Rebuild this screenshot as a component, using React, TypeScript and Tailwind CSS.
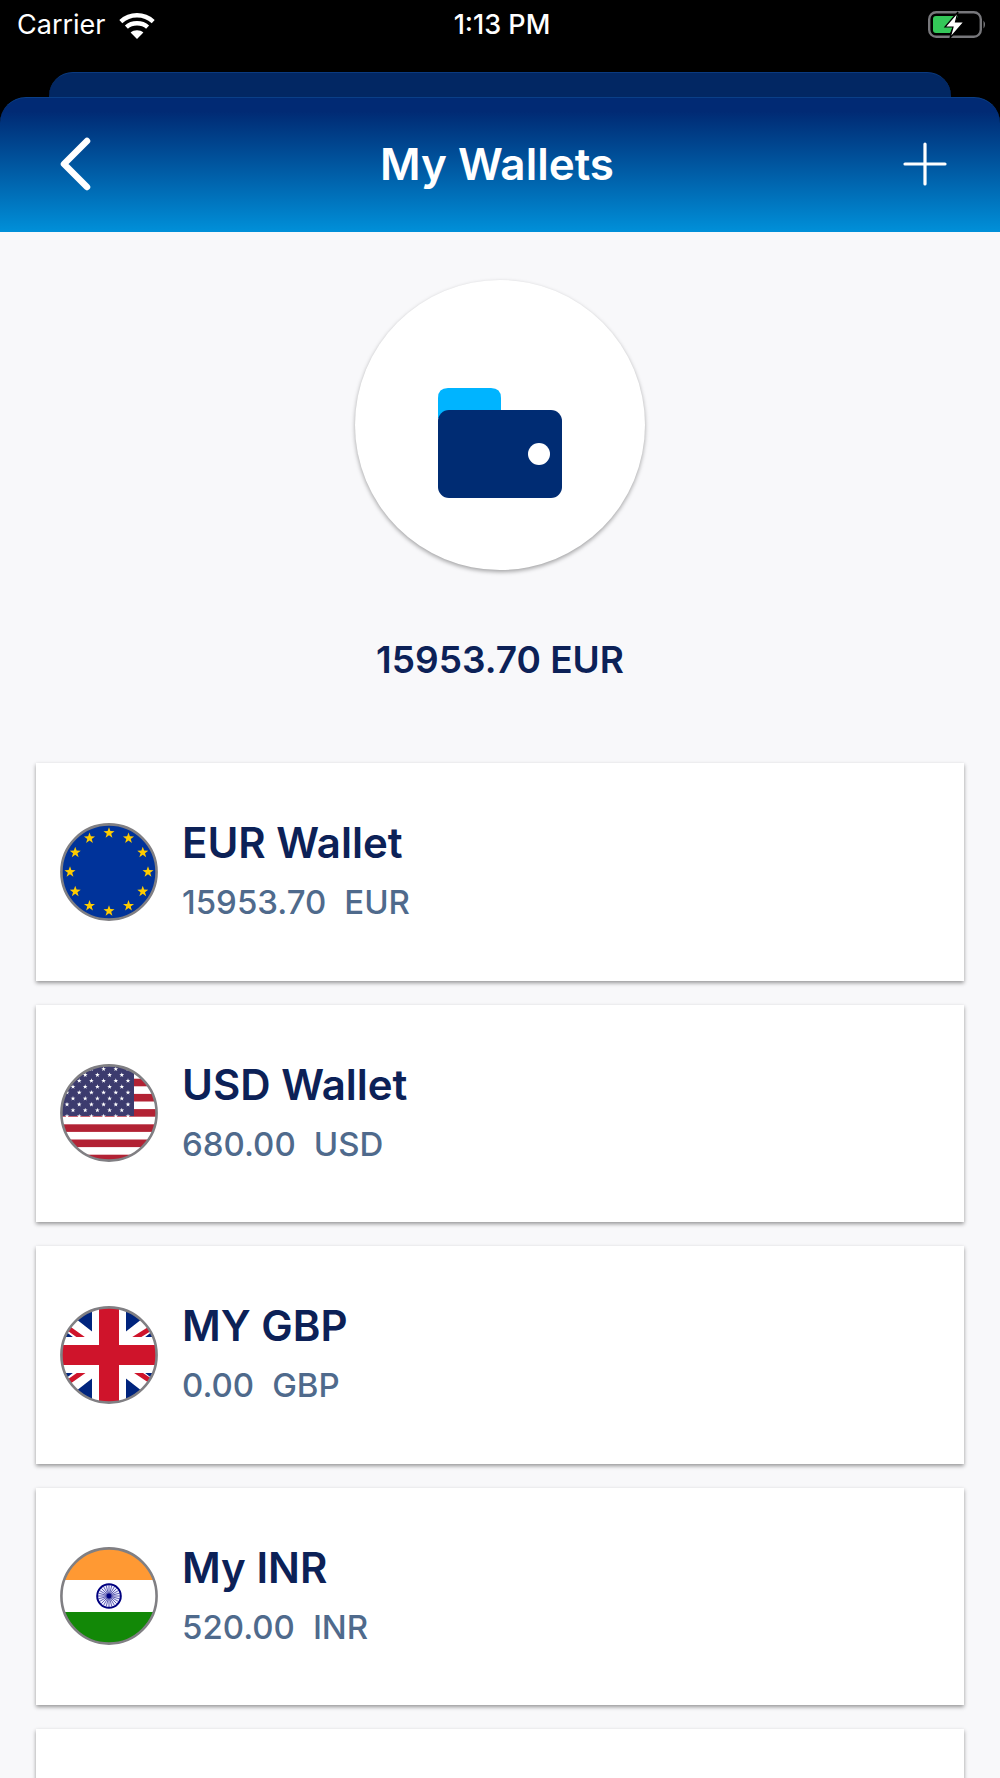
import React from 'react';

const starPoints = (cx: number, cy: number, r: number) => {
    const pts: string[] = [];
    for (let i = 0; i < 10; i++) {
        const rad = i % 2 === 0 ? r : r * 0.4;
        const a = -Math.PI / 2 + (i * Math.PI) / 5;
        pts.push(`${(cx + rad * Math.cos(a)).toFixed(2)},${(cy + rad * Math.sin(a)).toFixed(2)}`);
    }
    return pts.join(' ');
};

const FlagShell: React.FC<{ id: string; children: React.ReactNode }> = ({ id, children }) => (
    <svg width="98" height="98" viewBox="0 0 98 98" className="shrink-0">
        <defs>
            <clipPath id={id}>
                <circle cx="49" cy="49" r="48" />
            </clipPath>
        </defs>
        <g clipPath={`url(#${id})`}>{children}</g>
        <circle cx="49" cy="49" r="47.6" fill="none" stroke="#807f83" strokeWidth="2.6" />
    </svg>
);

const EuFlag = () => (
    <FlagShell id="eu">
        <rect width="98" height="98" fill="#00339a" />
        {Array.from({ length: 12 }).map((_, i) => {
            const a = (i * Math.PI) / 6;
            return (
                <polygon
                    key={i}
                    points={starPoints(49 + 39 * Math.sin(a), 49 - 39 * Math.cos(a), 5.8)}
                    fill="#ffcc00"
                />
            );
        })}
    </FlagShell>
);

const UsFlag = () => {
    const stars: React.ReactNode[] = [];
    for (let row = 0; row < 9; row++) {
        const odd = row % 2 === 1;
        for (let col = 0; col < (odd ? 5 : 6); col++) {
            const x = (odd ? 13 : 7) + col * 12.2;
            const y = 5 + row * 5.9;
            stars.push(<polygon key={`${row}-${col}`} points={starPoints(x, y, 2.5)} fill="#ffffff" />);
        }
    }
    return (
        <FlagShell id="us">
            <rect width="98" height="98" fill="#ffffff" />
            {[0, 2, 4, 6, 8, 10, 12].map(i => (
                <rect key={i} y={i * 7.6 - 0.5} width="98" height="7.6" fill="#b22234" />
            ))}
            <rect width="74" height="52" fill="#3c3b6e" />
            {stars}
        </FlagShell>
    );
};

const UkFlag = () => (
    <FlagShell id="uk">
        <rect width="98" height="98" fill="#00247d" />
        <path d="M-6 6 L104 92 M104 6 L-6 92" stroke="#ffffff" strokeWidth="16" />
        <path d="M-6 12 L36 42 M104 14 L64 39 M-6 86 L34 58 M104 84 L62 56" stroke="#cf142b" strokeWidth="5" />
        <rect x="32" width="34" height="98" fill="#ffffff" />
        <rect y="31" width="98" height="36" fill="#ffffff" />
        <rect x="39" width="20" height="98" fill="#cf142b" />
        <rect y="39" width="98" height="20" fill="#cf142b" />
    </FlagShell>
);

const InFlag = () => (
    <FlagShell id="in">
        <rect width="98" height="33" fill="#ff9933" />
        <rect y="33" width="98" height="32" fill="#ffffff" />
        <rect y="65" width="98" height="33" fill="#128807" />
        <circle cx="49" cy="49" r="11.8" fill="#eef" stroke="#000080" strokeWidth="2" />
        {Array.from({ length: 24 }).map((_, i) => {
            const a = (i * Math.PI) / 12;
            return (
                <line
                    key={i}
                    x1="49"
                    y1="49"
                    x2={49 + 11 * Math.cos(a)}
                    y2={49 + 11 * Math.sin(a)}
                    stroke="#000080"
                    strokeWidth="0.6"
                />
            );
        })}
        <circle cx="49" cy="49" r="2.4" fill="#000080" />
    </FlagShell>
);

const wallets = [
    { name: 'EUR Wallet', amount: '15953.70', code: 'EUR', flag: <EuFlag /> },
    { name: 'USD Wallet', amount: '680.00', code: 'USD', flag: <UsFlag /> },
    { name: 'MY GBP', amount: '0.00', code: 'GBP', flag: <UkFlag /> },
    { name: 'My INR', amount: '520.00', code: 'INR', flag: <InFlag /> },
];

const StatusBar = () => (
    <div className="h-[72px] flex justify-between items-start text-white pl-[17px] pr-[13px] pt-[9px] font-['Inter',sans-serif]">
        <div className="flex items-center w-[200px] gap-[13px]">
            <span className="text-[27px] leading-[32px]">Carrier</span>
            <svg width="36" height="27" viewBox="0 0 36 27" fill="none" stroke="#ffffff" strokeWidth="4.4">
                <path d="M1.8 9.6 C11 1.2 25 1.2 34.2 9.6" />
                <path d="M7.4 15.2 C13 10 23 10 28.6 15.2" />
                <path d="M18 27 L11.6 20.4 C15 17.4 21 17.4 24.4 20.4 Z" fill="#ffffff" stroke="none" />
            </svg>
        </div>
        <span className="text-[27px] leading-[32px] font-medium">1:13 PM</span>
        <div className="w-[200px] flex justify-end">
            <svg width="59" height="28" viewBox="0 0 59 28" className="mt-[2px]">
                <rect x="1.2" y="1.2" width="51.6" height="24.6" rx="7" fill="none" stroke="#77777b" strokeWidth="2.4" />
                <path d="M8 5 H30 L22 22 H8 Q5 22 5 19 V8 Q5 5 8 5 Z" fill="#34c759" />
                <path d="M55.5 9.5 Q58.5 13.5 55.5 17.5 Z" fill="#77777b" />
                <path d="M30 1 L17 16 H25 L22 27 L36 11 H27.5 Z" fill="#ffffff" stroke="#000000" strokeWidth="1.2" />
            </svg>
        </div>
    </div>
);

const Header = () => (
    <>
        <div className="h-[25px] ml-[49px] mr-[49px] rounded-t-[24px] bg-[#022763] border-t border-[#0a3a80]" />
        <div className="h-[135px] rounded-t-[26px] border-t border-[#0a3f88] bg-linear-to-b from-[#012a74] from-10% to-[#0090d9] flex items-center justify-between pl-[59px] pr-[53px] pb-[2px]">
            <svg width="32" height="54" viewBox="0 0 32 54" fill="none" stroke="#ffffff" strokeWidth="6.5" strokeLinecap="round" strokeLinejoin="round">
                <path d="M28 4 L5 27 L28 50" />
            </svg>
            <span className="text-white text-[44px] leading-[52px] font-semibold font-['Inter',sans-serif]">My Wallets</span>
            <svg width="44" height="44" viewBox="0 0 44 44" stroke="#ffffff" strokeWidth="3.2" strokeLinecap="round">
                <path d="M22 2 V42 M2 22 H42" />
            </svg>
        </div>
    </>
);

const WalletGlyph = () => (
    <svg width="124" height="110" viewBox="0 0 124 110">
        <path d="M0 30 V10 Q0 0 10 0 H53 Q63 0 63 10 V30 Z" fill="#00b4ff" />
        <rect y="22" width="124" height="88" rx="11" fill="#002c73" />
        <circle cx="101" cy="66" r="11" fill="#ffffff" />
    </svg>
);

export default function App() {
    return (
        <div className="h-[1778px] w-[1000px] overflow-hidden bg-black">
            <StatusBar />
            <Header />
            <div className="bg-[#f8f8fa] h-full flex flex-col items-center pt-[48px]">
                <div className="w-[290px] h-[290px] rounded-full bg-white shadow-[0_2px_4px_rgba(0,0,0,0.35)] flex items-center justify-center pt-[36px]">
                    <WalletGlyph />
                </div>
                <div className="mt-[68px] h-[44px] text-[37px] leading-[44px] font-semibold text-[#0c2157] font-['Inter',sans-serif]">
                    15953.70 EUR
                </div>
                <div className="mt-[81px] w-[928px] flex flex-col gap-[24px]">
                    {wallets.map(w => (
                        <div key={w.name} className="h-[217.5px] bg-white shadow-[0_2px_4px_rgba(0,0,0,0.4)] flex items-center pl-[24px] gap-[24px]">
                            {w.flag}
                            <div className="font-['Inter',sans-serif] -mt-[4px]">
                                <div className="text-[42px] leading-[52px] font-semibold text-[#0c2157]">{w.name}</div>
                                <div className="mt-[13px] text-[33px] leading-[40px] font-medium text-[#4f6a8c] flex gap-[18px]">
                                    <span>{w.amount}</span>
                                    <span>{w.code}</span>
                                </div>
                            </div>
                        </div>
                    ))}
                    <div className="h-[217.5px] bg-white shadow-[0_2px_4px_rgba(0,0,0,0.4)]" />
                </div>
            </div>
        </div>
    );
}
